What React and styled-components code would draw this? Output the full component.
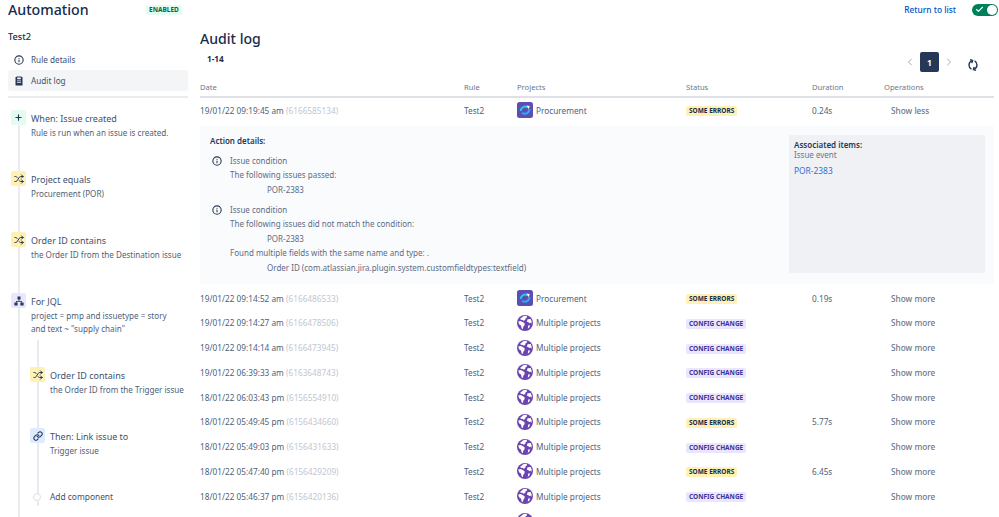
import React from "react";
import styled, { createGlobalStyle } from "styled-components";
import { Check, ChevronLeft, ChevronRight, Info, Link, Plus, Shuffle } from "lucide-react";

const GlobalStyle = createGlobalStyle`
  html, body {
    margin: 0;
    height: 100%;
    overflow: hidden;
    background: #fff;
    font-family: "Noto Sans", "Open Sans", sans-serif;
    color: #505f79;
  }
`;

const Page = styled.div`
  height: 517px;
  overflow: hidden;
`;

const TopBar = styled.header`
  display: flex;
  align-items: center;
  height: 19px;
  padding: 0 1px 0 8px;
`;

const AppTitle = styled.h1`
  margin: 0;
  width: 138px;
  font-size: 14.2px;
  line-height: 19px;
  font-weight: 500;
  color: #172b4d;
`;

const Lozenge = styled.span`
  display: inline-block;
  padding: 0 3px;
  border-radius: 2px;
  font-size: 6.5px;
  line-height: 10px;
  font-weight: 700;
  text-transform: uppercase;
  white-space: nowrap;
  background: ${(p) => p.$bg};
  color: ${(p) => p.$fg};
`;

const ReturnLink = styled.a`
  margin-left: auto;
  margin-right: 16px;
  font-size: 8.4px;
  font-weight: 500;
  color: #0052cc;
`;

const Toggle = styled.div`
  display: flex;
  align-items: center;
  justify-content: space-between;
  width: 26px;
  height: 12px;
  padding: 0 1.5px 0 3px;
  box-sizing: border-box;
  border-radius: 7px;
  background: #00805a;
  color: #fff;
`;

const ToggleKnob = styled.span`
  width: 10px;
  height: 10px;
  border-radius: 50%;
  background: #fff;
`;

const Body = styled.div`
  display: flex;
  align-items: flex-start;
`;

const Sidebar = styled.aside`
  flex: none;
  width: 180px;
  margin: 0 12px 0 8px;
`;

const RuleName = styled.div`
  margin-top: 11px;
  font-size: 9.2px;
  line-height: 14px;
  font-weight: 500;
  color: #172b4d;
`;

const NavList = styled.nav`
  margin-top: 5px;
  padding-bottom: 5px;
  border-bottom: 2px solid #ebecf0;
`;

const NavItem = styled.div`
  display: flex;
  align-items: center;
  gap: 7px;
  height: 21px;
  padding-left: 6px;
  border-radius: 3px;
  font-size: 8.2px;
  background: ${(p) => (p.$active ? "#f4f5f7" : "transparent")};
  color: #42526e;

  svg {
    flex: none;
    color: #253858;
  }
`;

const Timeline = styled.div`
  margin: 12px 0 0 10px;
  padding-bottom: 30px;
  border-left: 2px solid #ebecf0;
`;

const Step = styled.div`
  display: flex;
  gap: 5px;
  min-height: 61px;
  margin-left: -9px;
`;

const StepIcon = styled.span`
  flex: none;
  display: flex;
  align-items: center;
  justify-content: center;
  width: 15px;
  height: 15px;
  border-radius: 2px;
  background: ${(p) => p.$bg};
  color: #253858;
`;

const StepText = styled.div`
  min-width: 0;
  padding-top: 1.6px;
`;

const StepTitle = styled.div`
  font-size: 9px;
  line-height: 14px;
  color: #42526e;
`;

const StepSub = styled.div`
  font-size: 8.1px;
  line-height: 13px;
  color: #505f79;
`;

const NestedSteps = styled.div`
  margin: -14px 0 0 17px;
  padding-top: 27px;
  border-left: 2px solid #e9ebf3;
`;

const AddDot = styled.span`
  flex: none;
  box-sizing: border-box;
  width: 8px;
  height: 8px;
  margin: 3px 4px 0 3px;
  border: 1px solid #dfe1e6;
  border-radius: 50%;
  background: #fff;
`;

const AddRow = styled.div`
  display: flex;
  gap: 5px;
  height: 16px;
  padding-top: 1px;
  margin-left: -9px;
  font-size: 8.4px;
  line-height: 14px;
  color: #42526e;
`;

const Main = styled.main`
  flex: 1;
  min-width: 0;
  margin-right: 5px;
`;

const ListHead = styled.div`
  display: flex;
  justify-content: space-between;
  height: 58px;
`;

const PageTitle = styled.h2`
  margin: 0;
  padding-top: 10px;
  font-size: 14.1px;
  line-height: 20px;
  font-weight: 500;
  color: #172b4d;
`;

const Range = styled.div`
  margin: 4px 0 0 7px;
  font-size: 8.2px;
  line-height: 11px;
  font-weight: 700;
  color: #172b4d;
`;

const Pager = styled.div`
  display: flex;
  align-items: center;
  height: 20px;
  margin: 33px 15px 0 0;
  color: #a5adba;
`;

const PageButton = styled.span`
  display: flex;
  align-items: center;
  justify-content: center;
  width: 19px;
  height: 20px;
  margin: 0 4px;
  border-radius: 2px;
  font-size: 8.5px;
  font-weight: 700;
  background: #253858;
  color: #fff;
`;

const RefreshWrap = styled.span`
  display: flex;
  margin: 5px 0 0 12px;
  color: #253858;
`;

const Row = styled.div`
  display: grid;
  grid-template-columns: 264px 53px 169px 126px 72px 1fr;
  align-items: center;
  height: ${(p) => (p.$head ? "19px" : "24.75px")};
  font-size: ${(p) => (p.$head ? "7.6px" : "8.25px")};
  color: ${(p) => (p.$head ? "#6b778c" : "#505f79")};
  border-bottom: ${(p) => (p.$head ? "2px solid #dfe1e6" : "0")};
  white-space: nowrap;
`;

const EventId = styled.span`
  color: #c1c7d0;
`;

const ProjectCell = styled.span`
  display: flex;
  align-items: center;
  gap: 3px;
`;

const Operation = styled.span`
  padding-left: 7px;
  font-weight: 500;
  color: #6b778c;
`;

const Details = styled.section`
  display: flex;
  justify-content: space-between;
  height: 158px;
  margin-top: 3px;
  margin-bottom: 2px;
  padding: 9px 9px 11px 10px;
  box-sizing: border-box;
  background: #fafbfc;
`;

const DetailsHeading = styled.div`
  font-size: 8px;
  line-height: 11px;
  font-weight: 600;
  color: #253858;
`;

const Condition = styled.div`
  display: flex;
  gap: 8px;
  margin-top: ${(p) => p.$top};

  svg {
    flex: none;
    margin: 2px 0 0 2px;
    color: #253858;
  }
`;

const DetailLine = styled.div`
  font-size: 8px;
  line-height: 14.5px;
  color: #5e6c84;
  padding-left: ${(p) => (p.$indent ? "37px" : "0")};
  white-space: nowrap;
`;

const Associated = styled.aside`
  width: 191px;
  padding: 5px 0 0 5px;
  background: #f0f1f4;
`;

const AssocTitle = styled.div`
  font-size: 8px;
  line-height: 10px;
  font-weight: 600;
  color: #253858;
`;

const AssocSub = styled.div`
  font-size: 8px;
  line-height: 10px;
  color: #6b778c;
`;

const AssocLink = styled.a`
  display: block;
  margin-top: 5px;
  font-size: 8.4px;
  line-height: 11px;
  color: #2f6fdc;
`;

const DocIcon = () => (
  <svg width="10" height="10" viewBox="0 0 10 10">
    <path fill="currentColor" d="M1.5 1h1v-.6h5V1h1v8.6h-7z" />
    <path fill="#f4f5f7" d="M3.2 1.4h3.6v1.8H3.2zM3 4.6h4v.7H3zM3 6.3h4V7H3z" />
  </svg>
);

const RefreshIcon = () => (
  <svg width="12" height="12" viewBox="0 0 12 12" fill="none" stroke="currentColor" strokeWidth="1.4">
    <path d="M5 1.6C3 2.6 2 4.2 2 6c0 1.8.9 3.3 2.4 4.2" />
    <path d="M3 .7l2.6.8-.8 2.6" />
    <path d="M7 10.4C9 9.4 10 7.8 10 6c0-1.8-.9-3.3-2.4-4.2" />
    <path d="M9 11.3l-2.6-.8.8-2.6" />
  </svg>
);

const JqlIcon = () => (
  <svg width="10" height="10" viewBox="0 0 10 10" fill="currentColor">
    <path d="M3.5.6h3v3h-3zM.4 6.4h3.2v3.2H.4zM6.4 6.4h3.2v3.2H6.4z" />
    <path d="M4.6 3h.8v2H8v1.6h-.8V5.8H2.8v.8H2V5h2.6z" />
  </svg>
);

const ProjectIcon = () => (
  <svg width="16" height="16" viewBox="0 0 16 16">
    <rect width="16" height="16" rx="2.5" fill="#5e4db2" />
    <path d="M3.6 9a4.6 4.6 0 0 1 7.2-3.6" fill="none" stroke="#2fc6e8" strokeWidth="2" />
    <path d="M12.4 7a4.6 4.6 0 0 1-7.4 3.8" fill="none" stroke="#2fa8ee" strokeWidth="2" />
    <path d="M9.5 3.4l3.2.6-1 3.2z" fill="#fff" />
  </svg>
);

const GlobeIcon = () => (
  <svg width="16" height="16" viewBox="0 0 16 16">
    <circle cx="8" cy="8" r="8" fill="#6a45b0" />
    <path
      fill="#fff"
      d="M6.6.9 9.6.8l.5 1.5-1.6 1.2-.3 1.4-1.7.9-1.2-1-1.3.2-.8-1.2zM1.2 6.6l2.4-.5 2.5 1.1 1.6 1.2-.2 1.9-1.2 1.4-.4 2.2-1.3-.5-.5-2.7-2-1.4zM10.6 4.3l3-.3 1.1 2.6-.2 2.2-1.2-1.2-1 .7-1.1-1.3-1.4-.3zM11.2 10.4l1.8-.2-.6 2.4-1.6 1.2z"
    />
  </svg>
);

const rows = [
  ["19/01/22 09:14:52 am", "6166486533", "p", "e", "0.19s"],
  ["19/01/22 09:14:27 am", "6166478506", "m", "c", ""],
  ["19/01/22 09:14:14 am", "6166473945", "m", "c", ""],
  ["19/01/22 06:39:33 am", "6163648743", "m", "c", ""],
  ["18/01/22 06:03:43 pm", "6156554910", "m", "c", ""],
  ["18/01/22 05:49:45 pm", "6156434660", "m", "e", "5.77s"],
  ["18/01/22 05:49:03 pm", "6156431633", "m", "c", ""],
  ["18/01/22 05:47:40 pm", "6156429209", "m", "e", "6.45s"],
  ["18/01/22 05:46:37 pm", "6156420136", "m", "c", ""],
];

const StatusBadge = ({ kind }) =>
  kind === "e" ? (
    <Lozenge $bg="#fff0b3" $fg="#172b4d">Some errors</Lozenge>
  ) : (
    <Lozenge $bg="#eae6ff" $fg="#403294">Config change</Lozenge>
  );

const ProjectName = ({ kind, label = true }) => (
  <ProjectCell>
    {kind === "p" ? <ProjectIcon /> : <GlobeIcon />}
    {label && (kind === "p" ? "Procurement" : "Multiple projects")}
  </ProjectCell>
);

const LogRow = ({ date, id, project, status, duration, op }) => (
  <Row>
    <span>
      {date} <EventId>({id})</EventId>
    </span>
    <span>Test2</span>
    <ProjectName kind={project} />
    <span><StatusBadge kind={status} /></span>
    <span>{duration}</span>
    <Operation>{op}</Operation>
  </Row>
);

const App = () => (
  <Page>
    <GlobalStyle />
    <TopBar>
      <AppTitle>Automation</AppTitle>
      <Lozenge $bg="#e3fcef" $fg="#006644">Enabled</Lozenge>
      <ReturnLink>Return to list</ReturnLink>
      <Toggle>
        <Check size={9} strokeWidth={3} />
        <ToggleKnob />
      </Toggle>
    </TopBar>
    <Body>
      <Sidebar>
        <RuleName>Test2</RuleName>
        <NavList>
          <NavItem>
            <Info size={10} strokeWidth={2.6} />
            Rule details
          </NavItem>
          <NavItem $active>
            <DocIcon />
            Audit log
          </NavItem>
        </NavList>
        <Timeline>
          <Step>
            <StepIcon $bg="#e3fcef"><Plus size={9} strokeWidth={3} /></StepIcon>
            <StepText>
              <StepTitle>When: Issue created</StepTitle>
              <StepSub>Rule is run when an issue is created.</StepSub>
            </StepText>
          </Step>
          <Step>
            <StepIcon $bg="#fff0b3"><Shuffle size={10} strokeWidth={2.4} /></StepIcon>
            <StepText>
              <StepTitle>Project equals</StepTitle>
              <StepSub>Procurement (POR)</StepSub>
            </StepText>
          </Step>
          <Step>
            <StepIcon $bg="#fff0b3"><Shuffle size={10} strokeWidth={2.4} /></StepIcon>
            <StepText>
              <StepTitle>Order ID contains</StepTitle>
              <StepSub>the Order ID from the Destination issue</StepSub>
            </StepText>
          </Step>
          <Step>
            <StepIcon $bg="#eae6ff"><JqlIcon /></StepIcon>
            <StepText>
              <StepTitle>For JQL</StepTitle>
              <StepSub>project = pmp and issuetype = story<br />and text ~ "supply chain"</StepSub>
            </StepText>
          </Step>
          <NestedSteps>
            <Step>
              <StepIcon $bg="#fff0b3"><Shuffle size={10} strokeWidth={2.4} /></StepIcon>
              <StepText>
                <StepTitle>Order ID contains</StepTitle>
                <StepSub>the Order ID from the Trigger issue</StepSub>
              </StepText>
            </Step>
            <Step>
              <StepIcon $bg="#deebff"><Link size={10} strokeWidth={2.6} /></StepIcon>
              <StepText>
                <StepTitle>Then: Link issue to</StepTitle>
                <StepSub>Trigger issue</StepSub>
              </StepText>
            </Step>
            <AddRow>
              <AddDot />
              Add component
            </AddRow>
          </NestedSteps>
        </Timeline>
      </Sidebar>
      <Main>
        <ListHead>
          <div>
            <PageTitle>Audit log</PageTitle>
            <Range>1-14</Range>
          </div>
          <Pager>
            <ChevronLeft size={12} />
            <PageButton>1</PageButton>
            <ChevronRight size={12} />
            <RefreshWrap><RefreshIcon /></RefreshWrap>
          </Pager>
        </ListHead>
        <Row $head>
          <span>Date</span>
          <span>Rule</span>
          <span>Projects</span>
          <span>Status</span>
          <span>Duration</span>
          <span>Operations</span>
        </Row>
        <LogRow date="19/01/22 09:19:45 am" id="6166585134" project="p" status="e" duration="0.24s" op="Show less" />
        <Details>
          <div>
            <DetailsHeading>Action details:</DetailsHeading>
            <Condition $top="8px">
              <Info size={10} strokeWidth={2.6} />
              <div>
                <DetailLine>Issue condition</DetailLine>
                <DetailLine>The following issues passed:</DetailLine>
                <DetailLine $indent>POR-2383</DetailLine>
              </div>
            </Condition>
            <Condition $top="5.5px">
              <Info size={10} strokeWidth={2.6} />
              <div>
                <DetailLine>Issue condition</DetailLine>
                <DetailLine>The following issues did not match the condition:</DetailLine>
                <DetailLine $indent>POR-2383</DetailLine>
                <DetailLine>Found multiple fields with the same name and type: .</DetailLine>
                <DetailLine $indent>Order ID (com.atlassian.jira.plugin.system.customfieldtypes:textfield)</DetailLine>
              </div>
            </Condition>
          </div>
          <Associated>
            <AssocTitle>Associated items:</AssocTitle>
            <AssocSub>Issue event</AssocSub>
            <AssocLink>POR-2383</AssocLink>
          </Associated>
        </Details>
        {rows.map((r) => (
          <LogRow key={r[1]} date={r[0]} id={r[1]} project={r[2]} status={r[3]} duration={r[4]} op="Show more" />
        ))}
        <Row>
          <span />
          <span />
          <ProjectName kind="m" label={false} />
        </Row>
      </Main>
    </Body>
  </Page>
);

export default App;
